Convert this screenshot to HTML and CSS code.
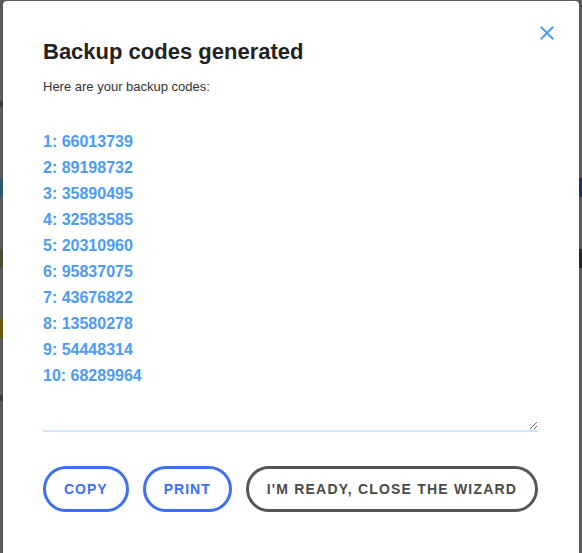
FILE: index.html
```html
<!DOCTYPE html>
<html lang="en">
<head>
<meta charset="utf-8">
<title>Backup codes generated</title>
<link rel="stylesheet" href="styles.css">
</head>
<body>
<div class="modal" role="dialog" aria-labelledby="title">
  <button class="close" aria-label="Close">
    <svg width="14" height="14" viewBox="0 0 14 14"><path d="M1.5 1.5 L12.5 12.5 M12.5 1.5 L1.5 12.5" stroke="#4c9bf4" stroke-width="2" stroke-linecap="square" fill="none"/></svg>
  </button>
  <h2 class="title" id="title">Backup codes generated</h2>
  <p class="intro">Here are your backup codes:</p>
  <textarea class="codes" readonly>1: 66013739
2: 89198732
3: 35890495
4: 32583585
5: 20310960
6: 95837075
7: 43676822
8: 13580278
9: 54448314
10: 68289964</textarea>
  <div class="actions">
    <button class="btn btn-blue">Copy</button>
    <button class="btn btn-blue">Print</button>
    <button class="btn btn-dark">I'm ready, close the wizard</button>
  </div>
</div>
</body>
</html>
```
FILE: styles.css
```css
html, body {
  margin: 0;
  height: 100%;
}
body {
  background-color: #5b5b5b;
  background-image:
    linear-gradient(to bottom,
      transparent 101px, #3a3a3a 101px, #3a3a3a 107px, transparent 107px,
      transparent 178px, #2e5776 178px, #2e5776 197px, transparent 197px,
      transparent 249px, #4b4c33 249px, #4b4c33 268px, transparent 268px,
      transparent 319px, #6a5a0c 319px, #6a5a0c 338px, transparent 338px,
      transparent 395px, #3a3a3a 395px, #3a3a3a 401px, transparent 401px),
    linear-gradient(to bottom,
      transparent 178px, #1f3168 178px, #1f3168 197px, transparent 197px,
      transparent 249px, #262626 249px, #262626 268px, transparent 268px);
  background-size: 3px 100%, 3px 100%;
  background-position: left top, right top;
  background-repeat: no-repeat;
  padding-top: 1px;
  box-sizing: border-box;
  font-family: "Liberation Sans", Arial, sans-serif;
  overflow: hidden;
}
.modal {
  position: relative;
  margin-left: 3px;
  width: 576px;
  min-height: 570px;
  background: #fff;
  border-radius: 4px;
  box-sizing: border-box;
  padding: 36px 40px 0 40px;
}
.close {
  position: absolute;
  top: 25px;
  right: 25px;
  width: 14px;
  height: 14px;
  padding: 0;
  border: 0;
  background: none;
  display: flex;
}
.title {
  margin: 0;
  font-size: 22px;
  line-height: 30px;
  font-weight: bold;
  color: #222;
}
.intro {
  margin: 11px 0 0;
  font-size: 13px;
  line-height: 18px;
  color: #333;
}
.codes {
  display: block;
  margin: 18px 0 0;
  width: 495px;
  height: 318px;
  box-sizing: border-box;
  padding: 15px 0 0 0;
  border: 0;
  border-bottom: 2px solid #d2e5fc;
  outline: none;
  resize: vertical;
  font-family: "Liberation Sans", Arial, sans-serif;
  font-size: 16px;
  font-weight: bold;
  line-height: 26px;
  color: #4c9bf4;
  background: #fff;
  overflow: hidden;
}
.actions {
  display: flex;
  gap: 14px;
  margin-top: 34px;
}
.btn {
  flex: none;
  height: 46px;
  padding: 0 18px;
  border-radius: 23px;
  border: 3px solid;
  background: #fff;
  font-family: "Liberation Sans", Arial, sans-serif;
  font-size: 14px;
  font-weight: bold;
  letter-spacing: 1px;
  text-transform: uppercase;
  white-space: nowrap;
  box-sizing: border-box;
}
.btn-blue {
  border-color: #3d6ef6;
  color: #3d6ef6;
}
.btn-dark {
  border-color: #555;
  color: #4a4a4a;
  letter-spacing: 1.2px;
}
```
